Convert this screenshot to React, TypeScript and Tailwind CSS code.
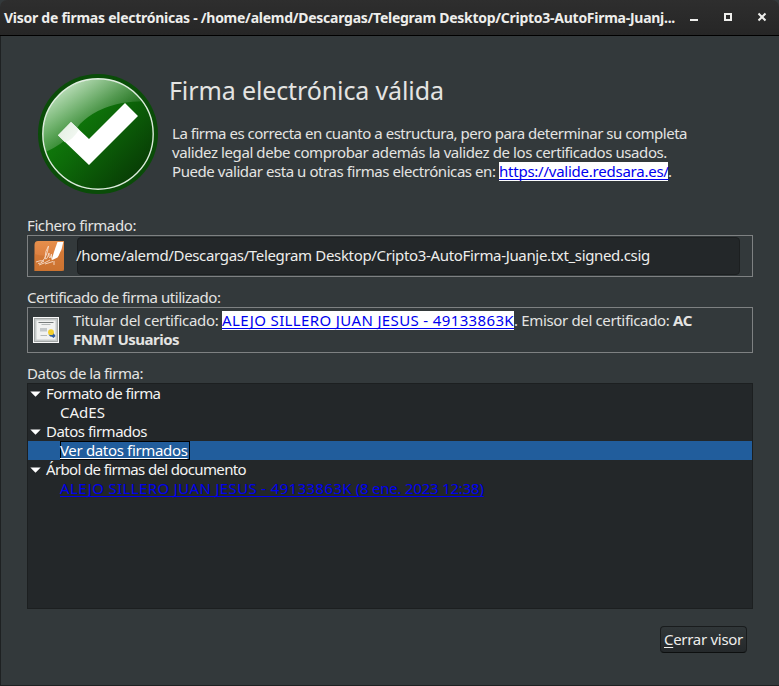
import type { ReactNode } from "react";

function Expander() {
  return (
    <svg className="mr-[5px] h-[6px] w-[11px] shrink-0" viewBox="0 0 11 6">
      <path d="M0.3 0.5h10.4L5.5 5.8z" fill="#fff" />
    </svg>
  );
}

function Branch({ children }: { children: ReactNode }) {
  return (
    <div className="flex h-[19px] items-center pl-[2px]">
      <Expander />
      {children}
    </div>
  );
}

function ValidSeal() {
  return (
    <svg className="h-[120px] w-[120px] shrink-0" viewBox="0 0 120 120">
      <defs>
        <linearGradient id="disc" x1="0.1" y1="0.15" x2="0.85" y2="0.85">
          <stop offset="0" stopColor="#128a0d" />
          <stop offset="0.45" stopColor="#0d6c09" />
          <stop offset="1" stopColor="#083f05" />
        </linearGradient>
        <linearGradient id="gloss" gradientUnits="userSpaceOnUse" x1="26" y1="12" x2="62" y2="66">
          <stop offset="0" stopColor="#fff" stopOpacity="0.72" />
          <stop offset="0.55" stopColor="#fff" stopOpacity="0.3" />
          <stop offset="1" stopColor="#fff" stopOpacity="0" />
        </linearGradient>
        <linearGradient id="shade" gradientUnits="userSpaceOnUse" x1="20" y1="55" x2="50" y2="75">
          <stop offset="0" stopColor="#e3efe2" />
          <stop offset="1" stopColor="#fff" />
        </linearGradient>
        <clipPath id="inner">
          <circle cx="60" cy="60" r="55" />
        </clipPath>
      </defs>
      <circle cx="60" cy="60" r="60" fill="#0a4c08" />
      <circle cx="60" cy="60" r="55.2" fill="url(#disc)" stroke="#dcebdc" strokeWidth="1.4" />
      <path
        d="M0 0H120V28Q102 26 84 29Q58 34 42 50Q28 71 0 81Z"
        fill="url(#gloss)"
        clipPath="url(#inner)"
      />
      <path d="M20 61.3L33 48L51 65L87 29L100 42L51 91Z" fill="#fff" />
      <path d="M20 61.3L33 48L41 55.5Q35 66 27 68.3Z" fill="url(#shade)" />
    </svg>
  );
}

function SignedFileIcon() {
  return (
    <svg className="h-[30px] w-[30px] shrink-0" viewBox="0 0 30 30">
      <defs>
        <linearGradient id="orange" x1="0" y1="0" x2="0" y2="1">
          <stop offset="0" stopColor="#e58f4c" />
          <stop offset="0.5" stopColor="#dd8040" />
          <stop offset="1" stopColor="#cf7634" />
        </linearGradient>
      </defs>
      <path d="M4 0H30V27.5Q30 30 27.5 30H0.5V4Q0.5 0 4 0Z" fill="url(#orange)" />
      <path d="M0.5 13Q14 18 30 9V30H0.5Z" fill="#c76f2c" fillOpacity="0.5" />
      <path d="M23.5 1H29.3Q28 10 23.5 16.5L17.8 19.2L18.2 16.7Q20.5 9 23.5 1Z" fill="#fff" />
      <path
        d="M2 21Q6 19 10 20Q6 23 4 22.4M5 24Q11 22 16 19M8 20.5Q13 16 14.5 5Q11 10 11 17Q12 20 14 15L15 12Q14.5 17 16 17L17.5 13Q17 19 18.5 19M11 23L19 20.5M20 20V24"
        fill="none"
        stroke="#f6ddca"
        strokeWidth="0.9"
      />
    </svg>
  );
}

function CertificateIcon() {
  return (
    <svg className="h-[26px] w-[26px] shrink-0" viewBox="0 0 26 26">
      <rect width="26" height="26" fill="#fafafa" />
      <rect x="1.5" y="1.5" width="23" height="23" fill="#f1f2f1" stroke="#a4a8a7" strokeWidth="1" />
      <rect x="2.75" y="2.75" width="20.5" height="20.5" fill="none" stroke="#c6caca" strokeWidth="1.5" />
      <path d="M5.5 5.5H20.5" stroke="#777c7c" strokeWidth="1" />
      <path d="M8.5 7.5H17.5M7.5 18.5H14" stroke="#b3b8b8" strokeWidth="1" />
      <rect x="7" y="11" width="7" height="3.5" fill="#c3c8ca" />
      <path d="M15.5 17.5L20.5 16L22.5 19L20.5 21L19 19.8L17.2 19.5Z" fill="#2f5c9e" />
      <circle cx="18" cy="15.2" r="2.9" fill="#f3cf2c" />
    </svg>
  );
}

export default function App() {
  return (
    <div className="flex h-[686px] w-[779px] flex-col overflow-hidden whitespace-pre bg-[#33393b] font-['Noto_Sans','Liberation_Sans',sans-serif] text-[15px] leading-[19px] text-[#e4e4e2]">
      <header className="flex h-9 shrink-0 items-center rounded-t-[7px] border-b border-black bg-linear-to-b from-[#2e2e2e] to-[#262626] pl-1 text-[#eeeeec]">
        <span className="w-[685px] text-[14px] font-bold tracking-[-0.265px]">
          Visor de firmas electrónicas - /home/alemd/Descargas/Telegram Desktop/Cripto3-AutoFirma-Juanj...
        </span>
        <svg className="mb-px h-[10px] w-[78px]" viewBox="0 0 78 10">
          <path d="M1 8H9" stroke="#eeeeec" strokeWidth="2" />
          <rect x="36" y="2" width="6" height="6" fill="none" stroke="#eeeeec" strokeWidth="2" />
          <path d="M69.5 1.5L76.5 8.5M76.5 1.5L69.5 8.5" stroke="#eeeeec" strokeWidth="2" />
        </svg>
      </header>

      <main className="flex min-h-0 grow flex-col border-b border-l border-[#1e2122] pl-[26px] pr-[26px]">
        <section className="mt-[38px] flex h-[120px] shrink-0 pl-[11px]">
          <ValidSeal />
          <div className="pl-[11px]">
            <h1 className="h-[50px] text-[25px] leading-[32px] tracking-[-0.12px]">Firma electrónica válida</h1>
            <div className="pl-[3px]">
              <p className="tracking-[-0.481px]">
                La firma es correcta en cuanto a estructura, pero para determinar su completa
              </p>
              <p className="tracking-[-0.402px]">
                validez legal debe comprobar además la validez de los certificados usados.
              </p>
              <p className="flex tracking-[-0.43px]">
                <span>Puede validar esta u otras firmas electrónicas en: </span>
                <a className="h-[19px] w-[169px] bg-white tracking-[-0.24px] text-[#0000ee] underline decoration-1 underline-offset-[2px] [text-decoration-skip-ink:none]">
                  https://valide.redsara.es/
                </a>
                <span>.</span>
              </p>
            </div>
          </div>
        </section>

        <div className="mt-[22px] h-[19px] tracking-[-0.403px]">Fichero firmado:</div>
        <section className="flex h-[42px] shrink-0 items-center border border-[#7e8182] pl-[6px]">
          <SignedFileIcon />
          <div className="ml-[13px] flex h-[38px] w-[663px] items-center rounded-[4px] border border-[#1c1f20] bg-[#232729] pb-px tracking-[-0.336px] text-[#eeeeec]">
            <span className="-ml-[2px]">
              /home/alemd/Descargas/Telegram Desktop/Cripto3-AutoFirma-Juanje.txt_signed.csig
            </span>
          </div>
        </section>

        <div className="mt-[11px] h-[19px] tracking-[-0.45px]">Certificado de firma utilizado:</div>
        <section className="flex h-[46px] shrink-0 items-center border border-[#7e8182] pl-[5px]">
          <CertificateIcon />
          <div className="-mt-px ml-[14px]">
            <div className="flex">
              <span className="w-[149px] tracking-[-0.309px]">Titular del certificado: </span>
              <a className="h-[19px] w-[292px] bg-white tracking-[0.363px] text-[#0000ee] underline decoration-1 underline-offset-[2px] [text-decoration-skip-ink:none]">
                ALEJO SILLERO JUAN JESUS - 49133863K
              </a>
              <span className="w-[159px] tracking-[-0.345px]">. Emisor del certificado: </span>
              <b className="tracking-[-0.355px]">AC</b>
            </div>
            <b className="block tracking-[-0.525px]">FNMT Usuarios</b>
          </div>
        </section>

        <div className="mt-[11px] h-[19px] tracking-[-0.466px]">Datos de la firma:</div>
        <section className="h-[226px] shrink-0 border border-[#1c1f20] bg-[#232729] text-[#f4f4f3]">
          <Branch>
            <span className="tracking-[-0.54px]">Formato de firma</span>
          </Branch>
          <div className="h-[19px] pl-[32px]">CAdES</div>
          <Branch>
            <span className="tracking-[-0.506px]">Datos firmados</span>
          </Branch>
          <div className="flex h-[19px] bg-[#215d9c] pl-[32px]">
            <a className="w-[130px] border border-black leading-[17px] tracking-[-0.34px] text-white underline decoration-1 underline-offset-[2px] [text-decoration-skip-ink:none]">
              <span className="-ml-px">Ver datos firmados</span>
            </a>
          </div>
          <Branch>
            <span className="tracking-[-0.643px]">Árbol de firmas del documento</span>
          </Branch>
          <div className="h-[19px] pl-[32px]">
            <a className="tracking-[0.363px] text-[#0000ee] underline decoration-1 underline-offset-[2px] [text-decoration-skip-ink:none]">
              ALEJO SILLERO JUAN JESUS - 49133863K
              <span className="tracking-[-0.22px]"> (8 ene. 2023 12:38)</span>
            </a>
          </div>
        </section>

        <footer className="mt-[17px] flex justify-end pr-[6px]">
          <button className="h-[27px] w-[87px] rounded-[4px] border border-[#191c1d] border-b-[#0d0f0f] bg-linear-to-b from-[#303638] to-[#25292b] text-[15px] leading-[23px] tracking-[-0.29px] text-[#eeeeec]">
            <span className="underline decoration-1 underline-offset-[2px] [text-decoration-skip-ink:none]">C</span>errar visor
          </button>
        </footer>
      </main>
    </div>
  );
}
